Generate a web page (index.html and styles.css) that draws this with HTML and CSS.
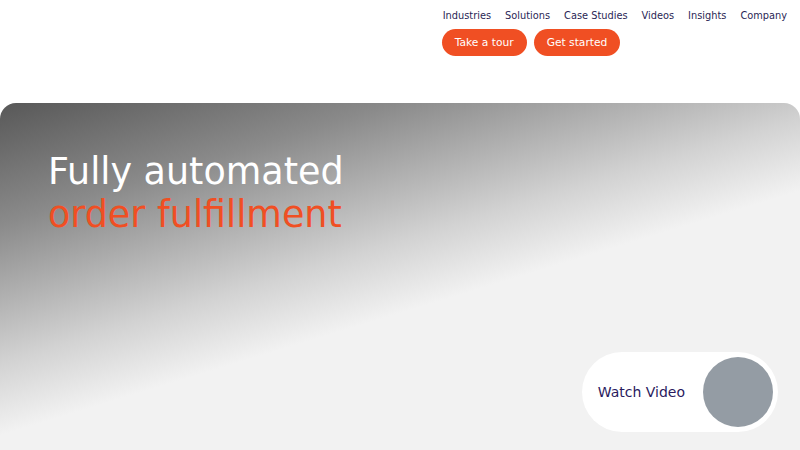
FILE: index.html
```html
<!DOCTYPE html>
<html lang="en">
<head>
  <meta charset="UTF-8">
  <meta name="viewport" content="width=device-width, initial-scale=1.0">
  <title>Fully automated order fulfillment</title>
  <link rel="stylesheet" href="styles.css">
</head>
<body>
  <header class="site-header">
    <div class="nav-block">
      <nav class="main-nav">
        <a href="#">Industries</a>
        <a href="#">Solutions</a>
        <a href="#">Case Studies</a>
        <a href="#">Videos</a>
        <a href="#">Insights</a>
        <a href="#">Company</a>
      </nav>
      <div class="nav-actions">
        <a class="btn" href="#">Take a tour</a>
        <a class="btn" href="#">Get started</a>
      </div>
    </div>
  </header>

  <section class="hero">
    <h1 class="hero-title">
      <span class="line-light">Fully automated</span>
      <span class="line-accent">order fulfillment</span>
    </h1>
    <div class="hero-bottom">
      <a class="watch-video" href="#">
        <span class="watch-label">Watch Video</span>
        <span class="watch-circle"></span>
      </a>
    </div>
  </section>
</body>
</html>
```
FILE: styles.css
```css
body {
  margin: 0;
  font-family: "DejaVu Sans", Verdana, sans-serif;
  background-color: #ffffff;
  color: #2a1f55;
}

a {
  text-decoration: none;
}

.site-header {
  display: flex;
  justify-content: flex-end;
  height: 103px;
  box-sizing: border-box;
  padding: 9px 13px 0 0;
}

.nav-block {
  display: flex;
  flex-direction: column;
  gap: 7px;
}

.main-nav {
  display: flex;
  gap: 14px;
  padding-left: 1px;
}

.main-nav a {
  font-size: 9.8px;
  line-height: 13px;
  color: #2a1f55;
}

.nav-actions {
  display: flex;
  gap: 7px;
}

.btn {
  display: inline-block;
  height: 27px;
  line-height: 27px;
  padding: 0 13px;
  border-radius: 14px;
  background-color: #f04f23;
  color: #ffffff;
  font-size: 10.7px;
}

.hero {
  display: flex;
  flex-direction: column;
  justify-content: space-between;
  height: 360px;
  box-sizing: border-box;
  padding: 47px 22px 0 48px;
  border-radius: 16px 16px 0 0;
  background: linear-gradient(163deg, #585858 0%, #8a8a8a 20%, #d2d2d2 43%, #f2f2f2 55%, #f2f2f2 100%);
}

.hero-title {
  margin: 0;
  font-size: 36.5px;
  font-weight: normal;
  line-height: 43px;
}

.hero-title span {
  display: block;
}

.line-light {
  color: #ffffff;
}

.line-accent {
  color: #f04f23;
}

.hero-bottom {
  display: flex;
  justify-content: flex-end;
  padding-bottom: 31px;
}

.watch-video {
  display: flex;
  align-items: center;
  gap: 18px;
  padding: 5px 5px 5px 16px;
  border-radius: 40px;
  background-color: #ffffff;
}

.watch-label {
  font-size: 14px;
  color: #2a1a5e;
}

.watch-circle {
  width: 70px;
  height: 70px;
  border-radius: 50%;
  background-color: #949ca4;
}
```
